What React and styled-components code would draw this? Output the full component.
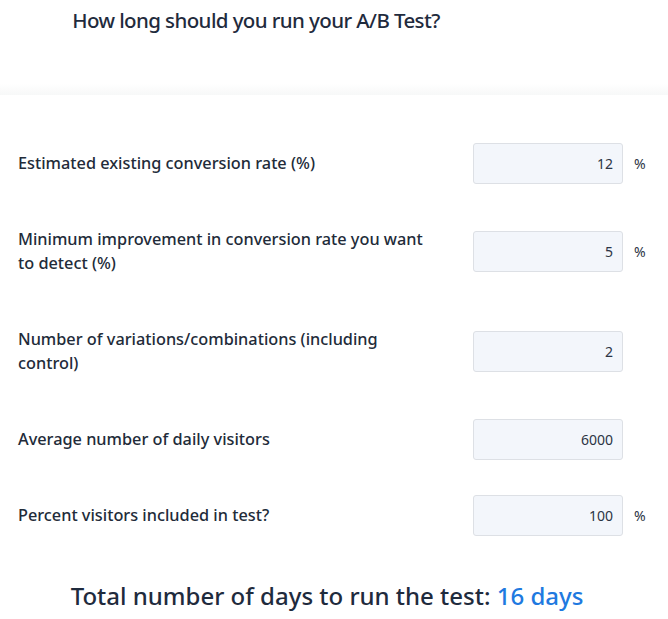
import React from "react";
import styled, { createGlobalStyle } from "styled-components";

const Global = createGlobalStyle`
  body {
    margin: 0;
    background: #ffffff;
    font-family: "Noto Sans", "Open Sans", sans-serif;
    color: #212b3a;
  }
`;

const Page = styled.div`
  width: 668px;
`;

const Header = styled.div`
  height: 95px;
  padding-right: 156px;
  box-sizing: border-box;
  text-align: center;
  background: linear-gradient(180deg, #ffffff 0%, #ffffff 88%, #f7f8f8 100%);
`;

const Title = styled.h1`
  margin: 0;
  padding-top: 5px;
  font-size: 20.5px;
  font-weight: 500;
  letter-spacing: -0.6px;
  line-height: 30px;
  color: #1f2b3d;
`;

const Form = styled.div`
  padding: 24px 0 0 18px;
`;

const Row = styled.div`
  display: flex;
  align-items: center;
  height: ${(p) => p.h}px;
`;

const Label = styled.div`
  width: 412px;
  font-size: 16.3px;
  font-weight: 500;
  line-height: 24px;
  color: #222b39;
`;

const InputBox = styled.input`
  margin-left: 43px;
  width: 150px;
  height: 41px;
  box-sizing: border-box;
  border: 1px solid #dde0e5;
  border-radius: 3px;
  background: #f3f6fb;
  padding: 0 9px;
  text-align: right;
  font-family: inherit;
  font-size: 14px;
  color: #2b3444;
  outline: none;
`;

const Unit = styled.span`
  margin-left: 11px;
  font-size: 14px;
  color: #2b3444;
`;

const Total = styled.div`
  text-align: center;
  padding: 20px 14px 0 0;
  font-size: 24px;
  font-weight: 500;
  color: #1f2b3d;
`;

const Days = styled.span`
  color: #2079e0;
`;

const fields = [
  { label: "Estimated existing conversion rate (%)", value: "12", unit: "%", h: 88 },
  { label: "Minimum improvement in conversion rate you want to detect (%)", value: "5", unit: "%", h: 88 },
  { label: "Number of variations/combinations (including control)", value: "2", unit: "", h: 112 },
  { label: "Average number of daily visitors", value: "6000", unit: "", h: 64 },
  { label: "Percent visitors included in test?", value: "100", unit: "%", h: 88 },
];

export default function App() {
  return (
    <Page>
      <Global />
      <Header>
        <Title>How long should you run your A/B Test?</Title>
      </Header>
      <Form>
        {fields.map((f) => (
          <Row key={f.label} h={f.h}>
            <Label>{f.label}</Label>
            <InputBox defaultValue={f.value} />
            {f.unit && <Unit>{f.unit}</Unit>}
          </Row>
        ))}
      </Form>
      <Total>
        Total number of days to run the test: <Days>16 days</Days>
      </Total>
    </Page>
  );
}
